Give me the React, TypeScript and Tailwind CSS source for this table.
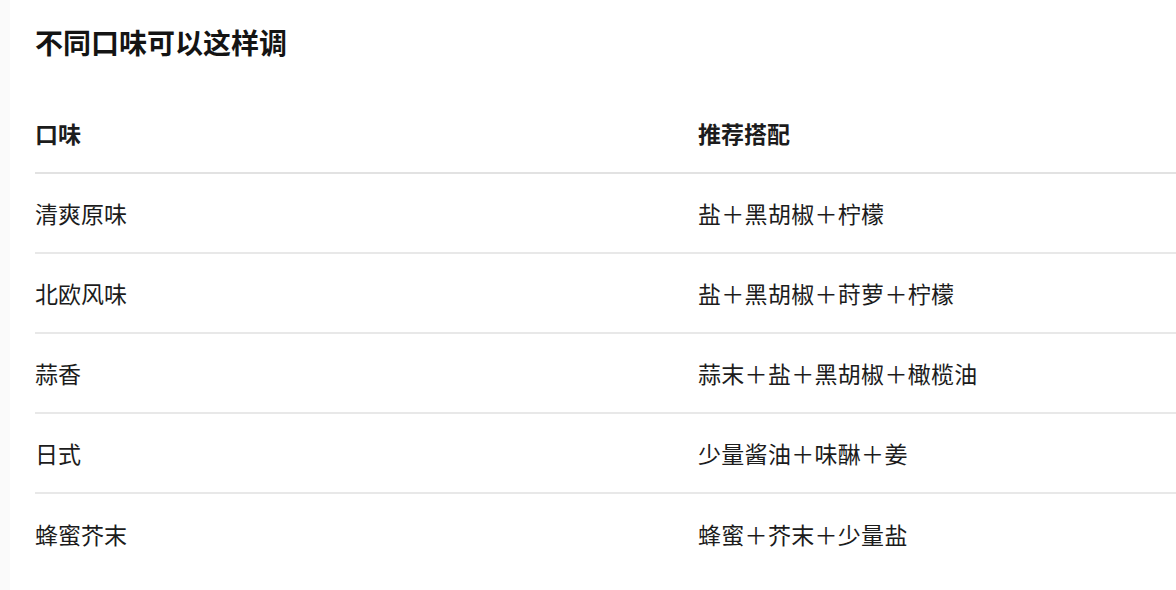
const rows = [
  { flavor: "清爽原味", combo: "盐＋黑胡椒＋柠檬" },
  { flavor: "北欧风味", combo: "盐＋黑胡椒＋莳萝＋柠檬" },
  { flavor: "蒜香", combo: "蒜末＋盐＋黑胡椒＋橄榄油" },
  { flavor: "日式", combo: "少量酱油＋味醂＋姜" },
  { flavor: "蜂蜜芥末", combo: "蜂蜜＋芥末＋少量盐" },
];

export default function App() {
  return (
    <div className="flex h-[590px] w-[1176px] overflow-hidden bg-white font-['Noto_Sans_CJK_SC','Noto_Sans',sans-serif] text-[#1c1c1c]">
      <div className="w-[10px] shrink-0 bg-[#fafafa]" />
      <div className="min-w-0 flex-1 pl-[25px]">
        <h2 className="mt-[22px] text-[28px] font-bold leading-[40px] text-[#141414]">
          不同口味可以这样调
        </h2>

        <div className="mt-[32px]">
          <div className="grid h-[80px] grid-cols-[663px_1fr] items-center border-b-2 border-[#e2e2e2] text-[23px] font-bold">
            <div>口味</div>
            <div>推荐搭配</div>
          </div>
          {rows.map((r) => (
            <div
              key={r.flavor}
              className="grid h-[80px] grid-cols-[663px_1fr] items-center border-b-2 border-[#e8e8e8] text-[23px] last:border-b-0"
            >
              <div>{r.flavor}</div>
              <div className="tracking-[0.3px]">{r.combo}</div>
            </div>
          ))}
        </div>
      </div>
    </div>
  );
}
